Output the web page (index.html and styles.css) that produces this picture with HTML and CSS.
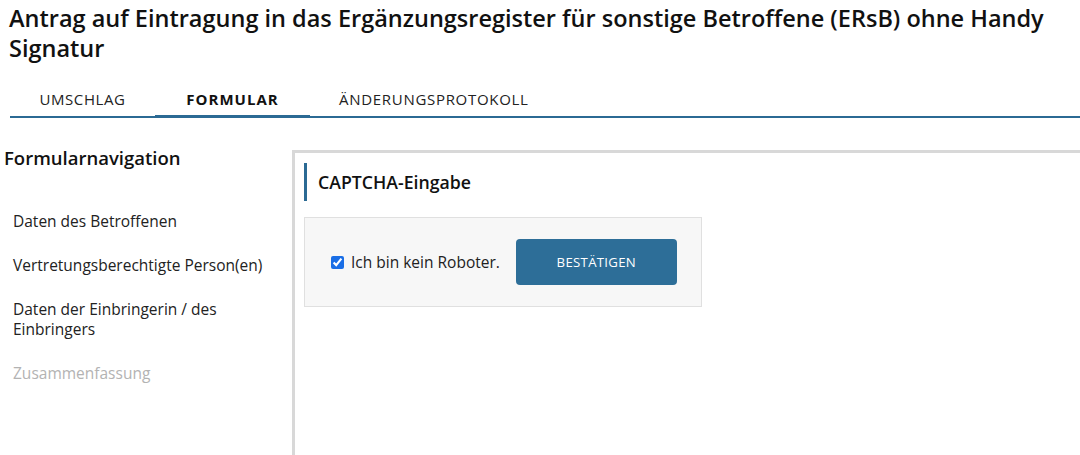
FILE: index.html
```html
<!DOCTYPE html>
<html lang="de">
<head>
<meta charset="utf-8">
<link rel="stylesheet" href="styles.css">
</head>
<body>
<h1 class="title">Antrag auf Eintragung in das Ergänzungsregister für sonstige Betroffene (ERsB) ohne Handy Signatur</h1>
<nav class="tabs">
  <a class="tab tab-1">UMSCHLAG</a>
  <a class="tab tab-2 active">FORMULAR</a>
  <a class="tab tab-3">ÄNDERUNGSPROTOKOLL</a>
</nav>
<div class="main">
  <aside class="sidebar">
    <h2 class="side-title">Formularnavigation</h2>
    <ul class="side-list">
      <li>Daten des Betroffenen</li>
      <li>Vertretungsberechtigte Person(en)</li>
      <li>Daten der Einbringerin / des Einbringers</li>
      <li class="disabled">Zusammenfassung</li>
    </ul>
  </aside>
  <section class="panel">
    <h3 class="panel-head">CAPTCHA-Eingabe</h3>
    <div class="captcha">
      <label class="check"><input type="checkbox" checked> Ich bin kein Roboter.</label>
      <button class="btn">BESTÄTIGEN</button>
    </div>
  </section>
</div>
</body>
</html>
```
FILE: styles.css
```css
html, body { margin: 0; padding: 0; background: #fff; }
body { font-family: "Open Sans", "Noto Sans", sans-serif; color: #111; overflow: hidden; }
.title { margin: 0; padding: 3px 0 0 9px; font-size: 23.5px; font-weight: 600; line-height: 30px; color: #111; }
.tabs { display: flex; margin: 22px 0 0 10px; border-bottom: 2px solid #2b6a94; }
.tab { display: block; box-sizing: border-box; font-size: 15px; letter-spacing: 0.6px; color: #222; padding: 4px 0 6px 0; text-align: center; }
.tab-1 { width: 145px; }
.tab-2 { width: 155px; }
.tab-3 { padding-left: 29px; text-align: left; letter-spacing: 0.7px; }
.tab.active { font-weight: 700; letter-spacing: 1px; color: #111; border-bottom: 3px solid #2b6a94; margin-bottom: -2px; }
.main { display: flex; margin-top: 32px; }
.sidebar { width: 292px; flex: none; }
.side-title { margin: -4px 0 0 4px; font-size: 18.5px; font-weight: 600; line-height: 24px; color: #111; }
.side-list { list-style: none; margin: 41px 0 0 13px; padding: 0; width: 268px; }
.side-list li { font-size: 15.5px; line-height: 20px; color: #222; margin-bottom: 24px; }
.side-list li.disabled { color: #b3b3b3; }
.panel { flex: 1; height: 306px; border-top: 3px solid #d8d8d8; border-left: 3px solid #d8d8d8; box-sizing: border-box; padding: 10px 0 0 9px; }
.panel-head { margin: 0; border-left: 3px solid #2b6a94; padding: 9px 0 9px 11px; font-size: 17.7px; font-weight: 600; line-height: 20px; color: #111; }
.captcha { margin-top: 16px; width: 398px; height: 90px; background: #f7f7f7; border: 1px solid #e0e0e0; display: flex; align-items: center; padding-left: 26px; box-sizing: border-box; }
.check { display: flex; align-items: center; font-size: 15.5px; color: #222; }
.check input { margin: 0 7px 0 0; width: 13px; height: 13px; accent-color: #1a6ee6; }
.btn { margin-left: 16px; width: 161px; height: 46px; background: #2d6e98; color: #fff; border: none; border-radius: 4px; font-family: "Open Sans", sans-serif; font-size: 13.2px; letter-spacing: 0.3px; }
```
